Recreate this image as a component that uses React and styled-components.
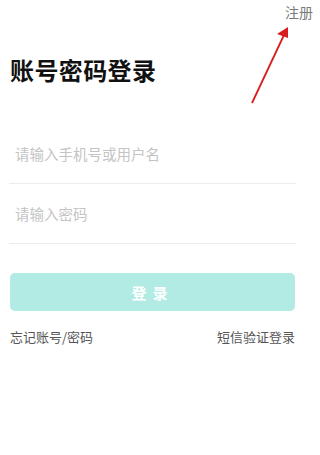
import styled, { createGlobalStyle } from 'styled-components';

const GlobalStyle = createGlobalStyle`
  html, body {
    margin: 0;
    padding: 0;
    background: #fff;
    font-family: "Noto Sans CJK SC", "Noto Sans", sans-serif;
  }
  * {
    box-sizing: border-box;
  }
`;

const Page = styled.div`
  position: relative;
  width: 320px;
  height: 455px;
  background: #fff;
  overflow: hidden;
`;

const TopBar = styled.div`
  display: flex;
  justify-content: flex-end;
  padding: 3px 7px 0 0;
  height: 24px;
`;

const RegisterLink = styled.a`
  font-size: 14px;
  line-height: 18px;
  color: #7a7a7a;
  text-decoration: none;
  cursor: pointer;
`;

const Content = styled.div`
  display: flex;
  flex-direction: column;
  padding: 0 24px 0 9px;
`;

const Title = styled.h1`
  margin: 32px 0 0 1px;
  font-size: 24px;
  line-height: 28px;
  font-weight: 700;
  color: #111;
  letter-spacing: 0.4px;
`;

const Form = styled.form`
  display: flex;
  flex-direction: column;
  margin-top: 40px;
`;

const Field = styled.div`
  display: flex;
  align-items: center;
  height: 60px;
  border-bottom: 1px solid #ececec;
`;

const Input = styled.input`
  flex: 1;
  border: none;
  outline: none;
  padding: 0 0 0 6px;
  font-family: inherit;
  font-size: 14.5px;
  color: #333;
  background: transparent;

  &::placeholder {
    color: #c4c4c4;
  }
`;

const SubmitButton = styled.button`
  margin: 29px 1px 0 1px;
  height: 38px;
  border: none;
  border-radius: 5px;
  background: #b2ebe4;
  color: #fff;
  font-family: inherit;
  font-size: 15px;
  font-weight: 700;
  letter-spacing: 6px;
  padding-left: 6px;
  cursor: pointer;
`;

const LinkRow = styled.div`
  display: flex;
  justify-content: space-between;
  margin: 17px 1px 0 1px;
`;

const TextLink = styled.a`
  font-size: 13px;
  line-height: 18px;
  color: #555;
  text-decoration: none;
  cursor: pointer;
`;

const Annotation = styled.svg`
  position: absolute;
  top: 0;
  left: 0;
  pointer-events: none;
`;

export default function App() {
  return (
    <Page>
      <GlobalStyle />
      <TopBar>
        <RegisterLink>注册</RegisterLink>
      </TopBar>
      <Content>
        <Title>账号密码登录</Title>
        <Form onSubmit={(e) => e.preventDefault()}>
          <Field>
            <Input type="text" placeholder="请输入手机号或用户名" />
          </Field>
          <Field>
            <Input type="password" placeholder="请输入密码" />
          </Field>
          <SubmitButton type="submit">登录</SubmitButton>
        </Form>
        <LinkRow>
          <TextLink>忘记账号/密码</TextLink>
          <TextLink>短信验证登录</TextLink>
        </LinkRow>
      </Content>
      <Annotation width="320" height="120" viewBox="0 0 320 120">
        <line x1="252" y1="103" x2="284" y2="35" stroke="#d81e1e" strokeWidth="1.8" />
        <polygon points="288,27 277,34 288,38" fill="#d81e1e" />
      </Annotation>
    </Page>
  );
}
